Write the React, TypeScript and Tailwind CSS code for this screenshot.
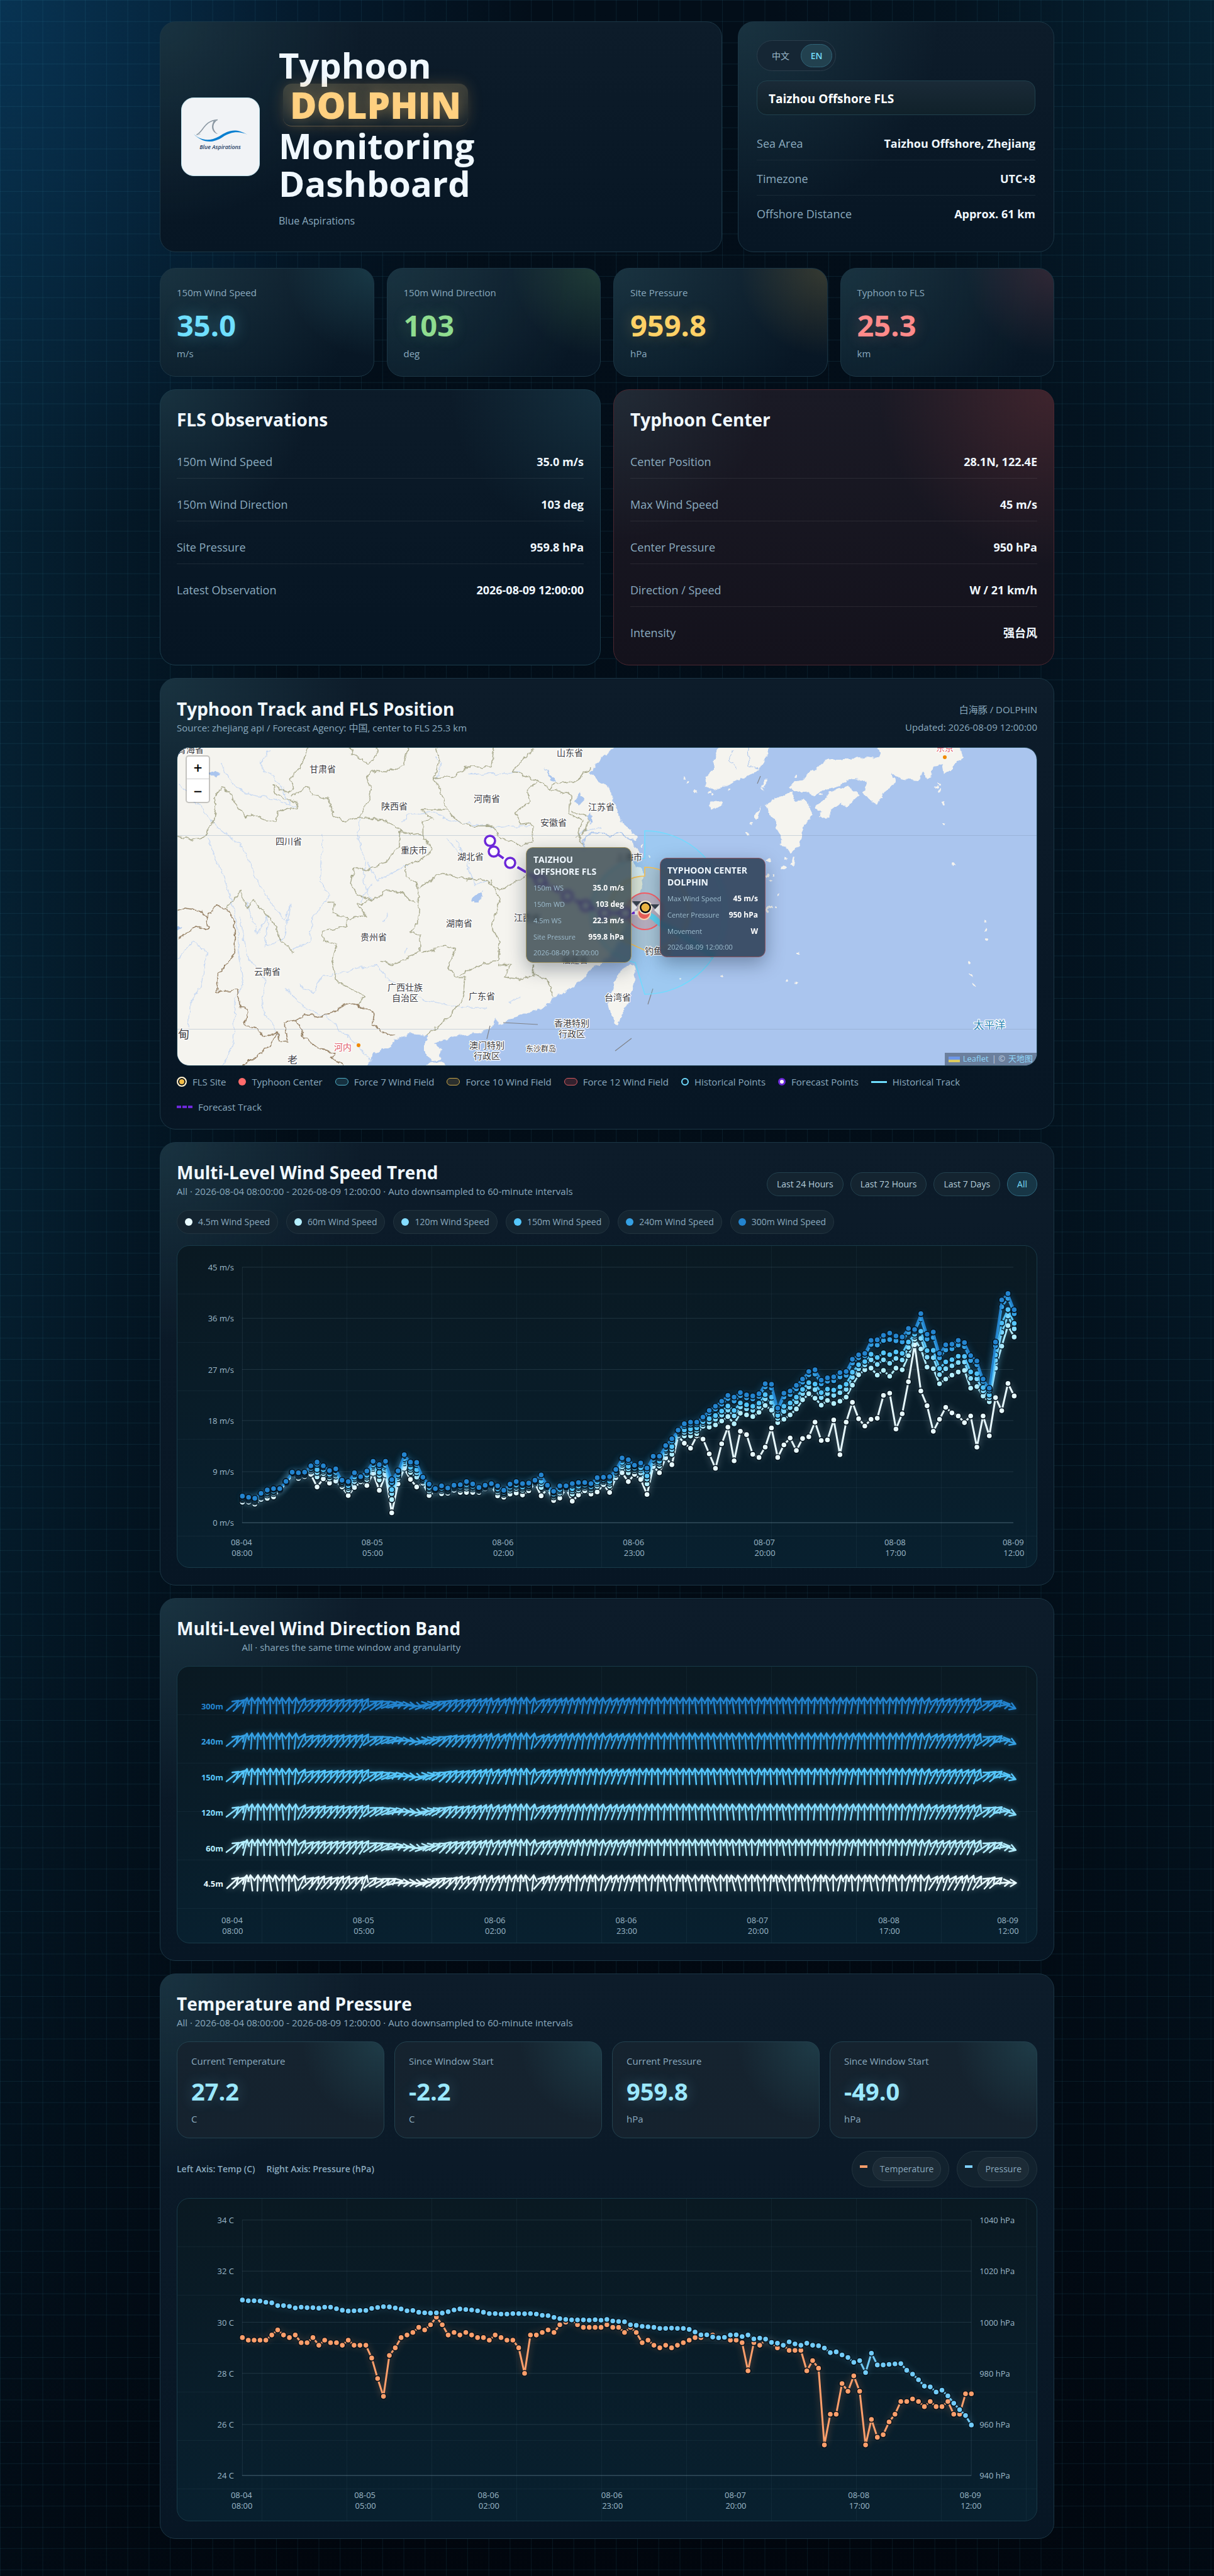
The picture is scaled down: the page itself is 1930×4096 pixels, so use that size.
import React from "react";

const levels = [
  { name: "300m", color: "#2384cf", dot: "bg-[#2384cf]", mix: 0 },
  { name: "240m", color: "#35a0e3", dot: "bg-[#35a0e3]", mix: 0.15 },
  { name: "150m", color: "#55c6fb", dot: "bg-[#55c6fb]", mix: 0.5 },
  { name: "120m", color: "#84dcff", dot: "bg-[#84dcff]", mix: 0.7 },
  { name: "60m", color: "#b5efff", dot: "bg-[#b5efff]", mix: 1 },
  { name: "4.5m", color: "#e8faff", dot: "bg-[#e8faff]", mix: 1 },
];

const raw300 = [
  1276, 1280, 1284, 1266, 1254, 1249, 1249, 1223, 1190, 1192, 1190, 1167, 1154, 1167, 1184, 1178, 1219, 1224, 1192, 1206,
  1186, 1151, 1163, 1151, 1217, 1185, 1127, 1154, 1155, 1208, 1233, 1249, 1239, 1247, 1237, 1235, 1224, 1232, 1245, 1237,
  1231, 1239, 1255, 1233, 1224, 1231, 1229, 1219, 1200, 1237, 1259, 1239, 1239, 1231, 1227, 1227, 1231, 1210, 1208, 1206,
  1180, 1139, 1145, 1165, 1157, 1175, 1133, 1133, 1094, 1070, 1039, 1016, 1010, 1010, 992, 968, 953, 935, 914, 920,
  904, 912, 916, 908, 872, 874, 960, 906, 898, 878, 855, 828, 822, 859, 851, 847, 832, 828, 784, 768,
  763, 716, 714, 698, 690, 700, 704, 673, 677, 620, 694, 686, 763, 732, 730, 716, 724, 771, 790, 855,
  888, 722, 571, 548, 606,
];
const raw45 = [
  1298, 1298, 1305, 1288, 1284, 1279, 1255, 1230, 1200, 1213, 1206, 1198, 1243, 1214, 1229, 1222, 1243, 1274, 1245, 1225,
  1238, 1194, 1255, 1200, 1336, 1232, 1176, 1216, 1243, 1230, 1274, 1258, 1268, 1266, 1255, 1263, 1263, 1263, 1263, 1250,
  1240, 1275, 1280, 1269, 1265, 1272, 1257, 1230, 1275, 1250, 1292, 1283, 1250, 1294, 1272, 1257, 1269, 1261, 1235, 1263,
  1210, 1192, 1224, 1198, 1216, 1270, 1170, 1192, 1139, 1163, 1060, 1086, 1104, 1060, 1071, 1124, 1176, 1088, 1028, 1149,
  1043, 1055, 1126, 1137, 1100, 1031, 1137, 1092, 1067, 1112, 1069, 1063, 1010, 1076, 1074, 1002, 1127, 1010, 939, 998,
  1024, 1000, 996, 914, 906, 1035, 980, 865, 732, 898, 951, 1043, 1000, 957, 977, 988, 1012, 988, 1100, 988,
  1059, 922, 969, 871, 916,
];
// 60m counts from hour 70 on, before that the mast follows the other two
const raw60Tail = [
  1052, 1060, 1060, 1052, 1025, 1028, 1020, 1006, 990, 1016, 978, 984, 990, 975, 950, 967, 1012, 1000, 984, 963,
  930, 908, 924, 949, 932, 943, 935, 920, 877, 840, 822, 816, 841, 824, 845, 816, 822, 771, 712, 747,
  812, 818, 872, 855, 841, 830, 824, 888, 882, 916, 937, 816, 737, 663, 704,
];
const raw60 = raw300.map((v, i) => (i < 70 ? v + (raw45[i] - v) * 0.6 : raw60Tail[i - 70]));

const toSpeed = (count: number) => (1372 - count) / 20.42;

const temps = [
  29.4, 29.3, 29.3, 29.3, 29.3, 29.5, 29.7, 29.5, 29.4, 29.5, 29.2, 29.2, 29.4, 29.1, 29.3, 29.2, 29.2, 29.1, 29.3, 29.1,
  29.1, 29.1, 28.6, 27.8, 27.1, 28.7, 29, 29.4, 29.5, 29.6, 29.8, 29.7, 29.9, 30.2, 29.9, 29.5, 29.6, 29.5, 29.6, 29.5,
  29.4, 29.4, 29.3, 29.5, 29.4, 29.3, 29.3, 29, 28, 29.5, 29.5, 29.6, 29.7, 29.6, 29.9, 30, 30.1, 29.9, 29.8, 29.8,
  29.8, 29.8, 29.9, 29.8, 29.8, 29.6, 29.8, 29.6, 29.2, 29.3, 29.1, 29, 29.1, 29, 29.1, 29.2, 29.3, 29.4, 29.4, 29.5,
  29.5, 29.4, 29.4, 29.3, 29.3, 29.2, 28.1, 29.2, 29.1, 29.3, 29.2, 29, 29.1, 28.9, 28.9, 28.9, 28.1, 28.5, 28.2, 25.2,
  26.4, 26.4, 27.6, 27.3, 27.9, 27.3, 25.2, 26.2, 25.5, 25.6, 26.1, 26.4, 26.9, 26.9, 27, 26.9, 26.7, 26.9, 26.7, 26.7,
  26.9, 26.4, 26.4, 27.2, 27.2,
];
const pressures = [
  1008.7, 1008.4, 1008.4, 1008.3, 1007.8, 1007.6, 1006.5, 1006.5, 1006.2, 1005.6, 1005.9, 1005.7, 1005.7, 1005.5, 1005.9,
  1005.9, 1005.3, 1004.7, 1004.4, 1004.5, 1004.6, 1004.6, 1005.4, 1005.8, 1006.1, 1006, 1005.6, 1005.2, 1004.5, 1004.6,
  1003.9, 1003.7, 1003.6, 1003.7, 1003.6, 1004.1, 1004.8, 1005.2, 1005, 1004.8, 1004.5, 1003.9, 1003.4, 1003.4, 1003.2,
  1003.2, 1003.4, 1003.4, 1003.3, 1003.4, 1003.2, 1002.7, 1002.6, 1001.9, 1001.4, 1001.1, 1000.9, 1000.9, 1000.9, 1000.8,
  1001, 1000.8, 1001.1, 1000.5, 1000.3, 1000.2, 999, 998.8, 998.4, 998.2, 998, 997.6, 997.6, 997.7, 997.6, 997.6, 997.2,
  996.2, 995.1, 995.1, 994.2, 993.9, 994.1, 995, 995.1, 994.4, 995, 993.5, 993.8, 993.4, 992.1, 991.8, 991, 992.3, 991.5,
  991, 991.8, 991, 990.8, 989.9, 988.1, 988.4, 987.2, 986.2, 984.3, 985, 980.3, 987.9, 983.3, 983.3, 983.5, 983.7, 983.8,
  981.2, 979.7, 977.5, 975, 974.7, 972.7, 973.4, 971.2, 968.3, 965.8, 963.5, 959.8,
];

// [hour, arrow angle]
const bearings = [
  [0, 50], [1, 42], [2, 17], [3, 3], [5, 0], [8, -3], [10, 4], [11, 30], [12, 42], [20, 40], [21, 32], [22, 56], [24, 60],
  [27, 84], [29, 104], [30, 78], [32, 68], [34, 48], [38, 38], [41, 20], [43, 28], [45, 8], [47, 2], [48, 10], [49, 36],
  [51, 28], [54, 14], [58, 8], [60, 18], [62, 22], [64, 10], [67, 2], [75, -3], [82, -5], [84, 4], [88, -6], [92, 3],
  [95, 0], [98, 10], [102, -1], [106, 4], [108, 8], [111, 14], [112, 28], [119, 28], [120, 54], [122, 52], [123, 78], [124, 112],
];

function bearingAt(hour: number) {
  for (let i = 1; i < bearings.length; i++) {
    const [h0, a0] = bearings[i - 1];
    const [h1, a1] = bearings[i];
    if (hour <= h1) return a0 + ((a1 - a0) * (hour - h0)) / (h1 - h0);
  }
  return 0;
}

const ticks = [
  { hour: 0, day: "08-04", time: "08:00" },
  { hour: 21, day: "08-05", time: "05:00" },
  { hour: 42, day: "08-06", time: "02:00" },
  { hour: 63, day: "08-06", time: "23:00" },
  { hour: 84, day: "08-07", time: "20:00" },
  { hour: 105, day: "08-08", time: "17:00" },
  { hour: 124, day: "08-09", time: "12:00" },
];

function Panel({ children, className = "" }: { children: React.ReactNode; className?: string }) {
  return (
    <section
      className={`rounded-[25px] border border-[#1b3645] bg-[radial-gradient(circle_at_0_0,rgba(100,190,200,0.14),transparent_320px),linear-gradient(180deg,#0d1c2a,#071624)] ${className}`}
    >
      {children}
    </section>
  );
}

function Heading({ title, sub }: { title: string; sub: string }) {
  return (
    <div>
      <h2 className="text-[28px] leading-8 font-bold text-[#f0f8ff]">{title}</h2>
      <p className="mt-1 text-[15px] leading-5 text-[#8aaabf]">{sub}</p>
    </div>
  );
}

function Logo() {
  return (
    <svg viewBox="0 0 125 125" className="h-[125px] w-[125px] shrink-0 rounded-[20px] border border-[#bfe3ee] bg-[#f1f3f6]">
      <path d="M24 59C34 56 36 36 58 35" fill="none" stroke="#8b98a3" strokeWidth="1.600" />
      <path d="M51 37L58 35C48 42 50 52 58 58C53 57 45 50 51 38Z" fill="#8b98a3" />
      <path d="M23 60L30 58" stroke="#b8c1c8" strokeWidth="1" />
      <path d="M19 58C30 68 44 71 60 62C76 52 86 48 106 59C92 53 80 54 66 63C48 75 32 71 19 58Z" fill="#0a7fd0" />
      <text x="62" y="82" textAnchor="middle" className="text-[9px] font-semibold italic" fill="#1d3b63">
        Blue Aspirations
      </text>
    </svg>
  );
}

function Hero() {
  return (
    <div className="grid grid-cols-[16fr_9fr] gap-[25px]">
      <Panel className="flex items-center gap-[30px] px-[33px]">
        <Logo />
        <div>
          <h1 className="text-[56px] leading-[60px] font-bold text-[#f0f8ff]">
            Typhoon
            <br />
            <span className="ml-[7px] inline-block rounded-[14px] border-b border-[#5c5344] bg-[linear-gradient(180deg,rgba(255,209,128,0.2),rgba(255,209,128,0.04))] px-[11px] text-[58px] leading-[67px] font-extrabold text-[#ffd080] shadow-[0_0_24px_rgba(255,190,100,0.18)] [text-shadow:0_0_22px_rgba(255,200,110,0.35)]">
              DOLPHIN
            </span>
            <br />
            Monitoring
            <br />
            Dashboard
          </h1>
          <p className="mt-[18px] text-base leading-6 text-[#8aaabf]">Blue Aspirations</p>
        </div>
      </Panel>
      <Panel className="px-[29px] pt-[29px] pb-[33px]">
        <div className="flex w-fit items-center rounded-full border border-[#2a3d4b] bg-[#152634] p-[5px] text-sm">
          <button className="h-[37px] w-[64px] text-[#9ebccd]">中文</button>
          <button className="h-[37px] w-[50px] rounded-full border border-[#2f6478] bg-[#22414f] font-semibold text-[#72dcf8]">EN</button>
        </div>
        <div className="mt-[15px] h-[55px] rounded-[16px] border border-[#20414d] bg-[linear-gradient(180deg,#1a2a37,#10212a)] px-[18px] text-[19px] leading-[56px] font-bold text-white">
          Taizhou Offshore FLS
        </div>
        <dl className="mt-4 text-[18px] leading-6">
          <SiteRow label="Sea Area" value="Taizhou Offshore, Zhejiang" />
          <SiteRow label="Timezone" value="UTC+8" />
          <SiteRow label="Offshore Distance" value="Approx. 61 km" />
        </dl>
      </Panel>
    </div>
  );
}

function SiteRow({ label, value }: { label: string; value: string }) {
  return (
    <div className="flex h-14 items-end justify-between border-b border-[#182936] pb-[14px] last:border-transparent">
      <dt className="text-[#8aaabf]">{label}</dt>
      <dd className="font-bold text-[#f0f8ff]">{value}</dd>
    </div>
  );
}

const kpis = [
  {
    label: "150m Wind Speed", value: "35.0", unit: "m/s",
    text: "text-[#6fdfff] [text-shadow:0_0_24px_rgba(110,223,255,0.35)]",
    glow: "bg-[radial-gradient(circle_at_100%_0,rgba(80,190,200,0.18),transparent_140px)]",
  },
  {
    label: "150m Wind Direction", value: "103", unit: "deg",
    text: "text-[#8fdc8f] [text-shadow:0_0_24px_rgba(140,220,140,0.25)]",
    glow: "bg-[radial-gradient(circle_at_100%_0,rgba(110,190,110,0.2),transparent_140px)]",
  },
  {
    label: "Site Pressure", value: "959.8", unit: "hPa",
    text: "text-[#ffd166] [text-shadow:0_0_24px_rgba(255,209,102,0.25)]",
    glow: "bg-[radial-gradient(circle_at_100%_0,rgba(220,180,80,0.2),transparent_140px)]",
  },
  {
    label: "Typhoon to FLS", value: "25.3", unit: "km",
    text: "text-[#ff8a8a] [text-shadow:0_0_24px_rgba(255,138,138,0.25)]",
    glow: "bg-[radial-gradient(circle_at_100%_0,rgba(255,110,120,0.15),transparent_140px)]",
  },
];

function Kpis() {
  return (
    <div className="grid grid-cols-4 gap-5">
      {kpis.map((k) => (
        <Panel key={k.label}>
          <div className={`h-[171px] rounded-[24px] px-[26px] pt-[26px] ${k.glow}`}>
            <p className="text-[15px] leading-6 text-[#8aaabf]">{k.label}</p>
            <p className={`mt-3 text-[47px] leading-[56px] font-bold ${k.text}`}>{k.value}</p>
            <p className="mt-[7px] text-[15px] leading-5 text-[#8aaabf]">{k.unit}</p>
          </div>
        </Panel>
      ))}
    </div>
  );
}

function InfoCard({ title, rows, tone }: { title: string; rows: string[][]; tone: string }) {
  return (
    <section className={`rounded-[25px] border px-[26px] pt-[27px] pb-[24px] ${tone}`}>
      <h2 className="mb-[6px] text-[28px] leading-10 font-bold text-[#f0f8ff]">{title}</h2>
      <dl className="text-[18px] leading-6">
        {rows.map(([label, value]) => (
          <div key={label} className="flex h-[68px] items-end justify-between border-b border-white/8 pb-[14px] last:border-transparent">
            <dt className="text-[#8aaabf]">{label}</dt>
            <dd className="font-bold text-[#f0f8ff]">{value}</dd>
          </div>
        ))}
      </dl>
    </section>
  );
}

// province and state lines, rivers
const provinceLines =
  "M515 37L505 75 470 130 450 165 460 200 440 215 385 185 400 225 470 250 475 275 430 280 400 290 400 325 365 320 310 300 290 310 255 260 230 205 200 198 170 235 185 260 170 330 140 390 90 400 45 385" +
  "M450 230L510 190 530 220 590 240 600 300 640 325 700 310 730 240 740 200 725 150 740 125 800 130 860 105 870 37" +
  "M665 37L670 65 710 80 725 105 760 70 755 37" +
  "M700 310L780 320 845 365 925 385 960 440 930 470 860 500 865 545 905 575 910 650 905 730 880 760 915 770 915 840 820 890 770 875" +
  "M925 385L925 330 960 320 920 280 1010 280 1040 320 1090 345 1180 345 1200 390 1280 425 1320 400 1315 335" +
  "M975 37L985 80 965 160 985 200 1010 270M965 160L1040 150 1080 115 1170 110 1180 37" +
  "M1320 40L1250 130 1335 165 1380 200 1400 175 1480 170 1500 135 1530 120" +
  "M1335 165L1300 210 1310 250 1255 290 1275 340 1315 335" +
  "M845 365L840 420 790 490 720 520 680 510 665 570 690 620 740 640 800 600 850 610 900 650" +
  "M740 640L690 650 720 700 660 710 650 740 560 760 570 800 615 810 600 880 615 960 680 990 715 1020 690 1050" +
  "M580 645L605 645 600 690 660 710M910 590L990 530 1090 555 1160 560 1200 600 1300 540" +
  "M1170 555L1200 640 1170 740 1200 800 1195 880 1150 885 1100 910 1040 940 1015 900 1040 830 1000 820 920 845" +
  "M1040 940L1075 940 1070 1010 1035 1080 970 1140 935 1170" +
  "M1195 890L1240 890 1215 940 1280 950 1320 930 1370 950 1395 1020M1320 890L1320 930" +
  "M460 840L420 800 380 710 350 680 315 630 295 670 270 600 245 640 220 670" +
  "M1380 200L1455 220 1450 300 1500 320 1480 370 1500 420M1460 290L1520 310 1510 360 1470 390";
const stateLines =
  "M45 680L75 668 130 680 150 710 155 755 110 740 75 770 45 790" +
  "M150 710L185 655 215 670 250 720 250 850 190 930 185 1000 260 990 265 1050 300 1070 285 1130 330 1140 350 1175 405 1160 410 1195 440 1195 430 1120 470 1110 500 1085 560 1100 610 1070 665 1040 750 1080 745 1130 790 1160 825 1172" +
  "M470 1110L500 1180 550 1220 610 1240 600 1260 640 1290M405 1160L370 1215 320 1260 275 1290";
const rivers =
  "M375 45L345 90 350 130 390 150 420 200 450 260 M200 100L240 180 300 220 370 235 470 270" +
  "M700 310L690 380 720 490 710 560 740 640M50 180L120 260 180 340 280 430 330 560 380 650 430 720 450 650 430 790 360 820 370 700 330 770 290 640" +
  "M150 390L200 520 240 640 260 740 265 850 280 970 250 1030 245 1200 210 1290M270 700L290 850 360 950 345 1050 410 1180" +
  "M565 380L560 460 555 560 590 620 530 700 520 800 460 830M970 70L990 100 975 160M1090 140L1200 140 1270 130" +
  "M730 490L760 560 870 500M740 570L700 640M850 330L870 300 960 290 1040 330 1200 350 1310 345M1010 400L1080 480 1110 580 1160 560" +
  "M480 970L530 1000 560 940 640 920 760 890 790 940 930 1030 1060 1060 1150 1060M430 980L500 1060 580 1100 690 1210 740 1270M100 800L150 840 130 970 90 1040 85 1140M45 870L100 800" +
  "M1040 400L1090 490M1480 370L1568 350M800 690L785 720M870 820L860 850M1230 1040L1275 1020";

const places: [string, number, number][] = [
  ["甘肃省", 231, 34], ["陕西省", 345, 93], ["河南省", 492, 81], ["山东省", 624, 8], ["江苏省", 674, 94], ["安徽省", 598, 119],
  ["四川省", 177, 149], ["重庆市", 376, 163], ["湖北省", 466, 173], ["湖南省", 448, 279], ["贵州省", 312, 301], ["云南省", 143, 356],
  ["江西省", 556, 270], ["广西壮族", 362, 381], ["自治区", 362, 398], ["广东省", 484, 395], ["香港特别", 627, 438], ["行政区", 627, 455],
  ["澳门特别", 492, 473], ["行政区", 492, 490], ["青海省", 21, 3], ["上海市", 718, 174], ["台湾省", 700, 397], ["福建省", 632, 337],
  ["钓鱼岛", 764, 323],
];
const islets = [
  [805, 48], [812, 55], [823, 68], [845, 70], [850, 73], [877, 66], [982, 45], [950, 83], [911, 120], [906, 136], [966, 176],
  [938, 204], [948, 202], [943, 212], [951, 252], [955, 234], [987, 326], [983, 376], [1210, 58], [1213, 68], [1207, 62], [1219, 88],
  [1219, 121], [1234, 186], [1284, 275], [1286, 291], [1286, 305], [1260, 342], [1262, 361], [1266, 377], [737, 156], [750, 175],
  [867, 362], [800, 368], [970, 371], [245, 457], [263, 499], [1022, 74], [1037, 72], [940, 260],
];
const forecast = [
  [497, 148], [503, 165], [529, 183], [577, 211], [620, 236], [649, 251], [679, 263], [712, 263], [742, 262],
];

function MapDrawing() {
  return (
    <svg viewBox="0 0 1366 505" preserveAspectRatio="xMidYMid slice" className="absolute inset-0 h-full w-full">
      <defs>
        <filter id="coast" x="-5%" y="-5%" width="110%" height="110%">
          <feTurbulence type="fractalNoise" baseFrequency="0.09" numOctaves="3" seed="4" />
          <feDisplacementMap in="SourceGraphic" scale="9" xChannelSelector="R" yChannelSelector="G" />
        </filter>
      </defs>
      <rect width="1366" height="507" fill="#aac5ee" />
      <g filter="url(#coast)">
        <g fill="#f5f4ef">
          <path d="M-20-20H710L697 0 684 8 672 18 665 27 660 36 655 40 663 47 668 52 684 61 690 74 696 88 700 101 704 116 716 127 730 141 729 148 714 141 725 152 730 160 740 174 723 179 731 188 745 204 737 211 739 222 731 232 725 238 721 255 714 281 702 307 690 327 671 344 654 355 643 371 623 383 599 397 588 409 561 421 530 431 512 441 506 429 497 449 468 455 446 458 424 465 408 470 420 478 417 496 406 499 393 484 393 470 399 457 366 455 346 465 335 478 311 486 300 507 290 530H-20Z" />
          <path d="M865-10L854 18 851 36 839 49 841 62 858 67 873 60 891 52 906 45 923 36 934 21 942-10Z" />
          <path d="M1112-10L1117 6 1114 17 1097 14 1069 18 1034 18 1024 26 997 47 974 59 979 70 997 70 1014 77 1024 68 1045 64 1069 50 1083 52 1096 54 1090 70 1098 82 1112 90 1126 68 1141 57 1136 40 1152 50 1176 52 1186 38 1191 50 1198 47 1202 29 1217 25 1220 41 1233 33 1238 24 1249 14 1240-10Z" />
          <path d="M1014 94L1028 80 1048 66 1066 59 1084 75 1071 87 1066 96 1053 87 1041 96 1033 113 1021 110 1024 102Z" />
          <path d="M935 91L953 80 976 70 981 84 998 82 1009 105 995 128 990 156 974 168 969 158 957 156 962 144 952 128 950 114 941 107Z" />
          <path d="M695 371L706 355 719 345 730 349 727 370 718 400 704 430 700 442 690 425 684 405Z" />
          <path d="M386 512L400 501 425 500 440 512Z" />
          <path d="M846 92C848 86 860 84 867 86C866 94 854 99 848 97Z" />
          <path d="M934 48L938 50 932 69 929 66ZM916 112L925 100 929 92 926 106 920 116ZM935 180L942 174 944 180Z" />
          <path d="M959 192C960 187 970 187 970 191C968 195 962 195 959 192ZM975 185L979 174 982 177 979 188Z" />
          <path d="M936 255L944 248 946 252 937 262Z" />
          {islets.map(([x, y]) => (
            <circle key={`${x}-${y}`} cx={x} cy={y} r="2" />
          ))}
        </g>
        <g transform="translate(-19.5 -15) scale(.4431 .4038)" fill="none" strokeLinejoin="round">
          <path d={rivers} stroke="#c6d8f3" strokeWidth="1.2" vectorEffect="non-scaling-stroke" />
          <path d={provinceLines} stroke="#aaab8f" strokeWidth="1.5" vectorEffect="non-scaling-stroke" />
          <path d={stateLines} stroke="#978266" strokeWidth="1.6" vectorEffect="non-scaling-stroke" />
        </g>
        <g fill="#aac5ee">
          <path d="M50 38L60 36 68 43 58 47ZM470 237L484 228 487 236 478 246 468 246ZM632 84L640 72 646 82 636 92ZM584 30L596 44 602 54 594 50ZM0 282L8 286 0 291Z" />
          <path d="M930 62L938 66 933 72ZM652 110L658 102 660 120 656 122Z" />
        </g>
        <g fill="none" stroke="#aac5ee" strokeWidth="1.5">
          <path d="M645 160L648 140 662 134 676 136 688 142 700 136 716 142" />
          <path d="M884 5L876 20 890 35M907 0L909 30 924 33" strokeWidth="1" />
        </g>
      </g>
      <path d="M518 437L573 440M497 442L492 463M927 45L922 57M756 383L748 408M722 462L696 482" stroke="#7f8288" strokeWidth="1.2" />
      <path d="M0 139.500H1366M0 447.500H1366" stroke="#7f97b5" strokeWidth="1" opacity="0.35" />

      <path d="M743 132A130 130 0 0 1 743 392L728 342 721 340A86 86 0 0 1 657 262A86 86 0 0 1 743 176Z" fill="rgba(110,220,255,0.2)" stroke="#6fdcff" strokeWidth="1.6" />
      <path d="M743 190A71 71 0 0 1 814 262A71 62 0 0 1 743 322L721 312A58 58 0 0 1 685 262A58 58 0 0 1 743 204Z" fill="rgba(255,200,80,0.14)" stroke="#ffc651" strokeWidth="1.6" />
      <circle cx="743" cy="260" r="29" fill="rgba(255,90,100,0.2)" stroke="#ff5f66" strokeWidth="2" />

      <polyline points="750,266 757,270 768,280 800,296 850,330" fill="none" stroke="#5fd4f2" strokeWidth="9" strokeLinecap="round" />
      <polyline points={forecast.join(" ")} fill="none" stroke="#fff" strokeWidth="6" opacity="0.85" />
      <polyline points={forecast.join(" ")} fill="none" stroke="#6d28d9" strokeWidth="4" strokeDasharray="16 5" />
      {forecast.slice(0, -1).map(([x, y]) => (
        <circle key={x} cx={x} cy={y} r="8" fill="#fff" stroke="#6d28d9" strokeWidth="3.500" />
      ))}
      <circle cx="742" cy="263" r="10" fill="#f0625a" stroke="#ffd9b8" strokeWidth="2" />
      <circle cx="744" cy="254" r="11" fill="#fff3d6" />
      <circle cx="744" cy="254" r="9" fill="#090c12" />
      <circle cx="744" cy="254" r="6.500" fill="#f3bc45" />

      <g textAnchor="middle" fill="#3b3b40" stroke="#fff" strokeWidth="2.500" strokeLinejoin="round" paintOrder="stroke" className="text-sm">
        {places.map(([name, x, y]) => (
          <text key={`${name}${x}${y}`} x={x} y={y + 5}>
            {name}
          </text>
        ))}
        <text x="183" y="502" className="text-base">老</text>
        <text x="10" y="462" className="text-lg">甸</text>
        <text x="578" y="483" className="text-xs">东沙群岛</text>
        <text x="263" y="481" fill="#e05a68">河内</text>
        <text x="1220" y="5" fill="#e05a68">东京</text>
        <text x="1291" y="447" fill="#2a86b4" className="text-[17px]">太平洋</text>
      </g>
      <rect x="1260" y="448" width="70" height="6" fill="#aac5ee" />
      <circle cx="288" cy="473" r="3" fill="#f08a00" />
      <circle cx="1220" cy="15" r="3" fill="#f08a00" />
      <path d="M723 244H737L730 252ZM766 249H752L760 257Z" fill="#3c4550" />
      <path d="M722 245L731 254 722 263ZM767 249L758 258 767 267Z" fill="#fff" />
    </svg>
  );
}

function Popup({ title, rows, className }: { title: string[]; rows: string[][]; className: string }) {
  return (
    <div className={`absolute w-[168px] rounded-[11px] border px-[11px] pt-[9px] pb-[3px] shadow-[0_10px_30px_rgba(10,25,45,0.35)] backdrop-blur-[3px] ${className}`}>
      <h3 className="text-sm leading-[19px] font-bold whitespace-nowrap text-[#f0f8ff]">
        {title[0]}
        <br />
        {title[1]}
      </h3>
      <dl className="mt-1">
        {rows.map(([label, value]) => (
          <div key={label} className="flex h-[26px] items-center justify-between whitespace-nowrap">
            <dt className="text-[11px] text-[#9dbccd]">{label}</dt>
            <dd className="text-xs font-bold text-white">{value}</dd>
          </div>
        ))}
      </dl>
      <p className="text-[11px] leading-6 text-[#9dbccd]">2026-08-09 12:00:00</p>
    </div>
  );
}

const legend = [
  { label: "FLS Site", mark: "h-4 w-4 rounded-full border-2 border-[#fff1d0] bg-[#f3bc45] shadow-[inset_0_0_0_2px_#0b1119]" },
  { label: "Typhoon Center", mark: "h-3 w-3 rounded-full bg-[#ff6b6b]" },
  { label: "Force 7 Wind Field", mark: "h-3 w-[21px] rounded-full border border-[#4fb0c8] bg-[#16303f]" },
  { label: "Force 10 Wind Field", mark: "h-3 w-[21px] rounded-full border border-[#c9a548] bg-[#2b2f2e]" },
  { label: "Force 12 Wind Field", mark: "h-3 w-[21px] rounded-full border border-[#d65a60] bg-[#33222e]" },
  { label: "Historical Points", mark: "h-3 w-3 rounded-full border-2 border-[#6fdcff] bg-[#0b1a28]" },
  { label: "Forecast Points", mark: "h-3 w-3 rounded-full border-[3px] border-[#6d28d9] bg-white" },
  { label: "Historical Track", mark: "h-[3px] w-[25px] bg-[#6fdfff]" },
  { label: "Forecast Track", mark: "h-1 w-[25px] bg-[repeating-linear-gradient(90deg,#6d28d9_0,#6d28d9_7px,transparent_7px,transparent_9px)]" },
];

function MapPanel() {
  return (
    <Panel className="px-[26px] pt-8 pb-[15px]">
      <div className="flex justify-between">
        <Heading title="Typhoon Track and FLS Position" sub="Source: zhejiang api / Forecast Agency: 中国, center to FLS 25.3 km" />
        <p className="pt-[3px] text-right text-[15px] leading-[28px] text-[#8aaabf]">
          白海豚 / DOLPHIN
          <br />
          Updated: 2026-08-09 12:00:00
        </p>
      </div>
      <div className="relative mt-[18px] h-[507px] overflow-hidden rounded-[20px] border border-[#1d4150]">
        <MapDrawing />
        <div className="absolute top-[12px] left-[13px] flex w-[39px] flex-col rounded-[5px] border-2 border-black/20 bg-white bg-clip-padding text-[24px] leading-[35px] font-semibold text-black">
          <button className="h-9 border-b border-[#ccc]">+</button>
          <button className="h-9">−</button>
        </div>
        <Popup
          title={["TAIZHOU", "OFFSHORE FLS"]}
          rows={[["150m WS", "35.0 m/s"], ["150m WD", "103 deg"], ["4.5m WS", "22.3 m/s"], ["Site Pressure", "959.8 hPa"]]}
          className="top-[158px] left-[554px] border-[#a39560] bg-[rgba(40,56,66,0.76)]"
        />
        <Popup
          title={["TYPHOON CENTER", "DOLPHIN"]}
          rows={[["Max Wind Speed", "45 m/s"], ["Center Pressure", "950 hPa"], ["Movement", "W"]]}
          className="top-[175px] left-[767px] border-[#8c5560] bg-[rgba(36,54,76,0.82)]"
        />
        <div className="absolute right-0 bottom-0 flex h-5 items-center gap-[5px] bg-[#6b7f9d] px-[6px] text-[13px] text-[#c3d3e4]">
          <span className="h-[9px] w-[18px] bg-[linear-gradient(#6d97e8_50%,#dccb5e_50%)]" />
          <a href="#leaflet" className="text-[#8fd6fa]">Leaflet</a>
          <span>| ©</span>
          <a href="#tianditu" className="text-[#8fd6fa]">天地图</a>
        </div>
      </div>
      <ul className="mt-[5px] flex flex-wrap gap-x-5 text-[15px] leading-10 text-[#8aaabf]">
        {legend.map((l) => (
          <li key={l.label} className="flex items-center gap-[9px]">
            <span className={l.mark} />
            {l.label}
          </li>
        ))}
      </ul>
    </Panel>
  );
}

function ChartBox({ children }: { children: React.ReactNode }) {
  return (
    <div className="overflow-hidden rounded-[20px] border border-[#183a48] bg-[linear-gradient(90deg,transparent_134px,rgba(140,200,220,0.06)_134px),linear-gradient(180deg,transparent_76px,rgba(140,200,220,0.06)_76px),linear-gradient(180deg,#0a1922,#08202f)] bg-[size:135px_77px,135px_77px,100%_100%]">
      {children}
    </div>
  );
}

function TimeTicks({ x0, step, y }: { x0: number; step: number; y: number }) {
  return (
    <g textAnchor="middle" fill="#9db9c9" className="text-[13px]">
      {ticks.map((t) => (
        <React.Fragment key={t.hour}>
          <text x={x0 + t.hour * step - 1} y={y}>{t.day}</text>
          <text x={x0 + t.hour * step} y={y + 17}>{t.time}</text>
        </React.Fragment>
      ))}
    </g>
  );
}

function Series({ points, color }: { points: number[][]; color: string }) {
  return (
    <g>
      <polyline
        points={points.join(" ")} fill="none" stroke={color} strokeWidth="3" strokeLinejoin="round"
        style={{ filter: `drop-shadow(0 0 6px ${color}66)` }}
      />
      {points.map(([x, y]) => (
        <circle key={x} cx={x} cy={y} r="4.600" fill={color} stroke="#06131d" strokeWidth="1.600" />
      ))}
    </g>
  );
}

const chartTop = 34;
const chartBottom = 441;

function GridLines({ x1, labels, right }: { x1: number; labels: string[]; right?: string[] }) {
  return (
    <g fill="#9db9c9" className="text-[13px]">
      {labels.map((label, i) => {
        const y = chartTop + ((chartBottom - chartTop) / 5) * i;
        return (
          <g key={label}>
            <line x1="103" x2={x1} y1={y} y2={y} stroke="#8fb3c4" strokeWidth={i === 5 ? 1.5 : 1} opacity={i === 5 ? 0.3 : 0.16} />
            <text x="90" y={y + 5} textAnchor="end">{label}</text>
            {right && <text x={x1 + 13} y={y + 5}>{right[i]}</text>}
          </g>
        );
      })}
      <path d={`M103.500 ${chartTop}V${chartBottom}`} stroke="#8fb3c4" opacity="0.12" />
      {right && <path d={`M${x1} ${chartTop}V${chartBottom}`} stroke="#8fb3c4" opacity="0.16" />}
    </g>
  );
}

function TrendPanel() {
  const scaleY = (v: number) => chartBottom - (v / 45) * (chartBottom - chartTop);
  const step = 9.91;
  const lines = levels
    .map((l) => ({
      color: l.color,
      points: raw300.map((v, i) => {
        const count = l.name === "4.5m" ? raw45[i] : v + (raw60[i] - v) * l.mix;
        return [Math.round((103.5 + i * step) * 10) / 10, Math.round(scaleY(toSpeed(count)) * 10) / 10];
      }),
    }))
    .reverse();
  return (
    <Panel className="px-[26px] pt-[31px] pb-[27px]">
      <div className="flex items-start justify-between">
        <Heading title="Multi-Level Wind Speed Trend" sub="All · 2026-08-04 08:00:00 - 2026-08-09 12:00:00 · Auto downsampled to 60-minute intervals" />
        <div className="mt-4 flex gap-[11px] text-sm text-[#b4cddb]">
          {["Last 24 Hours", "Last 72 Hours", "Last 7 Days"].map((r) => (
            <button key={r} className="h-[38px] rounded-full border border-[#23414e] bg-[#142430] px-[15px]">{r}</button>
          ))}
          <button className="h-[38px] rounded-full border border-[#2f6a80] bg-[#173646] px-[15px] text-[#79dcf5]">All</button>
        </div>
      </div>
      <ul className="mt-5 flex gap-[13px] text-sm text-[#8aaabf]">
        {[...levels].reverse().map((l) => (
          <li key={l.name} className="flex h-[38px] items-center gap-[9px] rounded-full border border-[#22343f] bg-[#142430] px-3">
            <span className={`h-3 w-3 rounded-full ${l.dot}`} />
            {l.name} Wind Speed
          </li>
        ))}
      </ul>
      <div className="mt-[18px]">
        <ChartBox>
          <svg viewBox="0 0 1368 512" className="block w-full">
            <GridLines x1={1331} labels={["45 m/s", "36 m/s", "27 m/s", "18 m/s", "9 m/s", "0 m/s"]} />
            {lines.map((l) => (
              <Series key={l.color} points={l.points} color={l.color} />
            ))}
            <TimeTicks x0={103} step={step} y={477} />
          </svg>
        </ChartBox>
      </div>
    </Panel>
  );
}

function DirectionPanel() {
  const hours = raw300.map((_, i) => i);
  return (
    <Panel className="px-[26px] pt-[31px] pb-[27px]">
      <div className="w-fit text-right">
        <Heading title="Multi-Level Wind Direction Band" sub="All · shares the same time window and granularity" />
      </div>
      <div className="mt-5">
        <ChartBox>
          <svg viewBox="0 0 1368 439" className="block w-full">
            {levels.map((l, row) => {
              const y = 62 + row * 56.5;
              return (
                <g key={l.name}>
                  <line x1="88" x2="1321" y1={y} y2={y} stroke="#8fb3c4" opacity="0.14" />
                  <text x="73" y={y + 6} textAnchor="end" fill={l.color} className="text-[13px] font-bold">{l.name}</text>
                  <g stroke={l.color} strokeWidth="2.500" fill="none" strokeLinecap="round" strokeLinejoin="round" style={{ filter: `drop-shadow(0 0 5px ${l.color}66)` }}>
                    {hours.map((h) => {
                      const sway = row === 5 ? Math.sin(h * 1.7) * 8 - 3 : Math.sin(h * 2.1 + row * 0.3) * 3;
                      const angle = h === 124 && row === 5 ? 90 : bearingAt(h) + sway;
                      return <path key={h} d="M0 12.500V-12.500M-5.500-3.500L0-12.500 5.500-3.500" transform={`translate(${88 + h * 9.96} ${y}) rotate(${angle})`} />;
                    })}
                  </g>
                </g>
              );
            })}
            <TimeTicks x0={88} step={9.96} y={409} />
          </svg>
        </ChartBox>
      </div>
    </Panel>
  );
}

const stats = [
  ["Current Temperature", "27.2", "C"],
  ["Since Window Start", "-2.2", "C"],
  ["Current Pressure", "959.8", "hPa"],
  ["Since Window Start", "-49.0", "hPa"],
];

function ClimatePanel() {
  const step = 9.36;
  const height = chartBottom - chartTop;
  const x = (i: number) => Math.round((103.5 + i * step) * 10) / 10;
  return (
    <Panel className="px-[26px] pt-[31px] pb-[27px]">
      <Heading title="Temperature and Pressure" sub="All · 2026-08-04 08:00:00 - 2026-08-09 12:00:00 · Auto downsampled to 60-minute intervals" />
      <div className="mt-5 grid grid-cols-4 gap-4">
        {stats.map(([label, value, unit], i) => (
          <div
            key={i}
            className="h-[154px] rounded-[20px] border border-[#23424f] bg-[radial-gradient(circle_at_100%_0,rgba(80,190,200,0.16),transparent_130px),linear-gradient(#15232f,#15222e)] px-[22px] pt-[18px]"
          >
            <p className="text-[15px] leading-6 text-[#8aaabf]">{label}</p>
            <p className="mt-3 text-[38px] leading-[48px] font-bold text-[#9be8ff] [text-shadow:0_0_22px_rgba(120,220,255,0.3)]">{value}</p>
            <p className="mt-[10px] text-[15px] leading-5 text-[#8aaabf]">{unit}</p>
          </div>
        ))}
      </div>
      <div className="mt-5 flex items-center justify-between text-sm text-[#8aaabf]">
        <p className="flex gap-[18px] font-semibold">
          <span>Left Axis: Temp (C)</span>
          <span>Right Axis: Pressure (hPa)</span>
        </p>
        <div className="flex gap-3">
          <div className="flex h-[58px] items-center gap-2 rounded-full border border-[#22333e] bg-[#12222e] px-3">
            <span className="mb-2 h-1 w-3 bg-[#ff9f6b]" />
            <button className="h-[38px] rounded-full border border-[#2a3b46] bg-[#1c2b36] px-[11px]">Temperature</button>
          </div>
          <div className="flex h-[58px] items-center gap-2 rounded-full border border-[#22333e] bg-[#12222e] px-3">
            <span className="mb-2 h-1 w-3 bg-[#7ed0ff]" />
            <button className="h-[38px] rounded-full border border-[#2a3b46] bg-[#1c2b36] px-[11px]">Pressure</button>
          </div>
        </div>
      </div>
      <div className="mt-[17px]">
        <ChartBox>
          <svg viewBox="0 0 1368 513" className="block w-full">
            <GridLines
              x1={1264}
              labels={["34 C", "32 C", "30 C", "28 C", "26 C", "24 C"]}
              right={["1040 hPa", "1020 hPa", "1000 hPa", "980 hPa", "960 hPa", "940 hPa"]}
            />
            <Series color="#ff9f6b" points={temps.map((t, i) => [x(i), chartBottom - ((t - 24) / 10) * height])} />
            <Series color="#72ccfa" points={pressures.map((p, i) => [x(i), chartBottom - ((p - 940) / 100) * height])} />
            <TimeTicks x0={103} step={step} y={477} />
          </svg>
        </ChartBox>
      </div>
    </Panel>
  );
}

export default function App() {
  return (
    <div className="min-h-screen bg-[linear-gradient(180deg,transparent_45%,rgba(1,5,12,0.75)),radial-gradient(circle_at_0_0,rgba(10,70,115,0.5),transparent_850px),radial-gradient(circle_at_100%_0,rgba(10,66,92,0.22),transparent_700px),linear-gradient(90deg,rgba(8,50,74,0.5),transparent_24%,transparent_78%,rgba(8,46,68,0.34)),linear-gradient(180deg,#030e19,#020d17_60%,#020a13)] font-['Open_Sans','Noto_Sans_CJK_SC',sans-serif]">
      <div className="min-h-screen bg-[linear-gradient(90deg,rgba(70,180,210,0.1)_1px,transparent_1px),linear-gradient(180deg,rgba(70,180,210,0.1)_1px,transparent_1px)] bg-[size:1.75vw_1.75vw] px-6 pt-[34px] pb-[58px]">
        <main className="mx-auto flex w-full max-w-[1422px] flex-col gap-5">
          <div className="mb-[5px]">
            <Hero />
          </div>
          <Kpis />
          <div className="grid grid-cols-2 gap-5">
            <InfoCard
              title="FLS Observations"
              tone="border-[#1b3c4b] bg-[radial-gradient(circle_at_100%_0,rgba(80,180,200,0.13),transparent_240px),radial-gradient(circle_at_0_0,rgba(100,190,200,0.14),transparent_240px),linear-gradient(180deg,#0c1b29,#061523)]"
              rows={[["150m Wind Speed", "35.0 m/s"], ["150m Wind Direction", "103 deg"], ["Site Pressure", "959.8 hPa"], ["Latest Observation", "2026-08-09 12:00:00"]]}
            />
            <InfoCard
              title="Typhoon Center"
              tone="border-[#4b2730] bg-[radial-gradient(circle_at_100%_0,rgba(255,90,90,0.16),transparent_280px),radial-gradient(circle_at_0_0,rgba(100,190,200,0.1),transparent_240px),linear-gradient(180deg,#1a1a25,#14121c)]"
              rows={[["Center Position", "28.1N, 122.4E"], ["Max Wind Speed", "45 m/s"], ["Center Pressure", "950 hPa"], ["Direction / Speed", "W / 21 km/h"], ["Intensity", "强台风"]]}
            />
          </div>
          <MapPanel />
          <TrendPanel />
          <DirectionPanel />
          <ClimatePanel />
        </main>
      </div>
    </div>
  );
}
